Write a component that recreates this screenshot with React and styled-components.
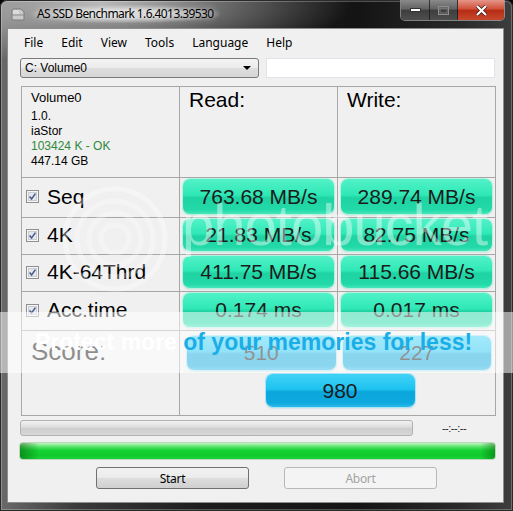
import styled, { createGlobalStyle } from 'styled-components';

const GlobalStyle = createGlobalStyle`
  html, body {
    margin: 0;
    padding: 0;
    background: #000;
  }
  body {
    width: 513px;
    height: 511px;
    overflow: hidden;
  }
`

const Window = styled.div`
  position: relative;
  width: 513px;
  height: 511px;
  box-sizing: border-box;
  display: flex;
  flex-direction: column;
  overflow: hidden;
  border-radius: 7px 7px 0 0;
  box-shadow: inset 0 0 0 1px #2a2a2a, inset 0 0 0 2px rgba(255,255,255,0.25);
  background:
    radial-gradient(ellipse 250px 60px at 100px 4px, rgba(200,200,200,0.9), rgba(160,160,160,0) 100%),
    linear-gradient(90deg, #6a6a6a 0%, #3a3a3a 15%, #1c1c1c 40%, #141414 70%, #2a2a2a 90%, #3e3e3e 100%);
  font-family: "Noto Sans", "Open Sans", sans-serif;
`

const TitleBar = styled.div`
  height: 29px;
  flex: none;
  display: flex;
  align-items: flex-start;
  padding-left: 10px;
`

const Title = styled.div`
  margin-left: 5px;
  margin-top: 5px;
  padding: 0 6px;
  font-size: 12px;
  line-height: 18px;
  letter-spacing: -0.6px;
  color: #000;
  border-radius: 10px;
  background: radial-gradient(ellipse at center, rgba(235,235,235,0.75) 30%, rgba(235,235,235,0) 75%);
  text-shadow: 0 0 6px rgba(255,255,255,0.9);
`

const CaptionGroup = styled.div`
  margin-left: auto;
  margin-right: 8px;
  display: flex;
  height: 20px;
  border: 1px solid rgba(210,210,210,0.55);
  border-top: none;
  border-radius: 0 0 5px 5px;
  overflow: hidden;
`

const CaptionButton = styled.div`
  width: ${p => p.$w}px;
  display: flex;
  align-items: center;
  justify-content: center;
  border-right: 1px solid rgba(20,20,20,0.7);
  background: ${p => p.$close
    ? 'linear-gradient(180deg, #e5968a 0%, #cf4f38 45%, #b62c15 52%, #c8482c 100%)'
    : 'linear-gradient(180deg, #8a8a8a 0%, #626262 45%, #3e3e3e 52%, #4e4e4e 100%)'};
  &:last-child { border-right: none; }
`

const Client = styled.div`
  flex: 1;
  margin: 0 10px 9px 8px;
  background: #f0f0f0;
  display: flex;
  flex-direction: column;
  padding: 0 8px 0 12px;
  box-shadow: 0 0 0 1px #8d8d8d;
`

const MenuBar = styled.div`
  height: 26px;
  display: flex;
  align-items: center;
  gap: 18px;
  padding-left: 4px;
  font-size: 12px;
  color: #000;
`

const DriveRow = styled.div`
  margin-top: 3px;
  height: 20px;
  display: flex;
  gap: 7px;
`

const Combo = styled.div`
  width: 239px;
  box-sizing: border-box;
  border: 1px solid #7a7a7a;
  border-radius: 3px;
  background: linear-gradient(180deg, #f4f4f4 0%, #ececec 48%, #dedede 52%, #d6d6d6 100%);
  display: flex;
  align-items: center;
  padding: 0 7px 0 4px;
  font-family: "Liberation Sans", Arial, sans-serif;
  font-size: 12px;
  justify-content: space-between;
`

const TextBox = styled.div`
  flex: 1;
  background: #fff;
  border: 1px solid #e2e3ea;
`

const ResultGrid = styled.div`
  margin-top: 8px;
  margin-left: 1px;
  width: 475px;
  box-sizing: border-box;
  display: grid;
  grid-template-columns: 157px 157px 157px;
  grid-template-rows: 90px 39px 36px 36px 38px 84px;
  gap: 1px;
  padding: 1px;
  background: #a7a7a7;
  font-family: "Liberation Sans", Arial, sans-serif;
`

const Cell = styled.div`
  background: #f0f0f0;
  min-width: 0;
`

const InfoCell = styled(Cell)`
  padding: 3px 9px 0;
  font-size: 12px;
  line-height: 15px;
  color: #000;
`

const InfoName = styled.div`
  font-size: 13px;
  line-height: 16px;
  margin-bottom: 3px;
`

const InfoOk = styled.div`
  color: #2f8a3a;
`

const HeadCell = styled(Cell)`
  padding: 1px 9px 0;
  font-size: 21px;
  line-height: 24px;
  color: #000;
`

const LabelCell = styled(Cell)`
  display: flex;
  align-items: center;
  gap: 8px;
  padding: 0 0 2px 4px;
  font-size: 21px;
  color: #000;
`

const ValueCell = styled(Cell)`
  display: flex;
  padding: 1px 3px 3px 3px;
`

const ValueBox = styled.div`
  flex: 1;
  display: flex;
  align-items: center;
  justify-content: center;
  border-radius: 7px;
  font-size: ${p => p.$size || 21}px;
  color: #1b1b1b;
  background: ${p => p.$tone === 'blue'
    ? 'linear-gradient(180deg, #40d2f6 0%, #1ec3f0 46%, #0ba6dc 54%, #0ea9de 88%, #2fbbea 100%)'
    : 'linear-gradient(180deg, #52f2c8 0%, #2fe8b6 46%, #1fd3a3 54%, #22d9a8 88%, #44e6bb 100%)'};
  box-shadow: ${p => p.$tone === 'blue'
    ? '0 0 0 1px #a8e4f6, 0 1px 2px rgba(0,110,160,0.35)'
    : '0 0 0 1px #b4f2df, 0 1px 2px rgba(0,140,100,0.35)'};
`

const ScoreLabel = styled(Cell)`
  padding: 5px 9px 0;
  font-size: 26px;
  line-height: 30px;
  color: #111;
`

const ScoreCell = styled(Cell)`
  grid-column: span 2;
  display: grid;
  grid-template-columns: 1fr 1fr;
  grid-template-rows: 34px 33px;
  column-gap: 7px;
  row-gap: 4px;
  padding: 5px 4px 0 7px;
`

const TotalBox = styled(ValueBox)`
  grid-column: span 2;
  justify-self: center;
  width: 149px;
  margin-left: 2px;
`

const ProgressRow = styled.div`
  margin-top: 4px;
  height: 16px;
  display: flex;
  align-items: center;
`

const Progress = styled.div`
  width: 393px;
  height: 16px;
  box-sizing: border-box;
  border: 1px solid #b2b2b2;
  border-radius: 3px;
  background: linear-gradient(180deg, #f2f2f2 0%, #dcdcdc 45%, #cdcdcd 55%, #d8d8d8 100%);
`

const TimeText = styled.div`
  flex: 1;
  text-align: center;
  font-family: "Liberation Sans", Arial, sans-serif;
  font-size: 11px;
  color: #222;
  letter-spacing: -0.5px;
`

const GreenBar = styled.div`
  margin-top: 7px;
  height: 16px;
  width: 475px;
  border-radius: 3px;
  box-shadow: 0 0 0 1px #b9d9b9;
  background:
    linear-gradient(90deg, rgba(0,70,0,0.45) 0%, rgba(0,70,0,0) 4%, rgba(0,70,0,0) 97%, rgba(0,70,0,0.4) 100%),
    linear-gradient(180deg, #c2f6c2 0%, #5ee46e 22%, #16d234 45%, #0fca2c 75%, #1bd23a 100%);
`

const ButtonRow = styled.div`
  margin-top: 8px;
  display: flex;
  gap: 35px;
  padding-left: 76px;
`

const Button = styled.div`
  width: 153px;
  height: 22px;
  box-sizing: border-box;
  border-radius: 3px;
  display: flex;
  align-items: center;
  justify-content: center;
  font-size: 12px;
  letter-spacing: -0.3px;
  color: ${p => p.$disabled ? '#a3a3a3' : '#000'};
  border: 1px solid ${p => p.$disabled ? '#b5b9bc' : '#707070'};
  background: ${p => p.$disabled
    ? '#f4f4f4'
    : 'linear-gradient(180deg, #f2f2f2 0%, #ebebeb 48%, #dddddd 52%, #cfcfcf 100%)'};
`

const Watermark = styled.div`
  position: absolute;
  inset: 0;
  pointer-events: none;
`

const Band = styled.div`
  position: absolute;
  left: 0;
  right: 0;
  top: 312px;
  height: 61px;
  background: rgba(255,255,255,0.52);
`

const Slogan = styled.div`
  position: absolute;
  left: 35px;
  top: 331px;
  font-family: "Liberation Sans", Arial, sans-serif;
  font-weight: bold;
  font-size: 23px;
  line-height: 23px;
  white-space: nowrap;
  color: #1aaee8;
`

const SloganFaint = styled.span`
  color: #ffffff;
`

const LogoWord = styled.div`
  position: absolute;
  left: 182px;
  top: 196px;
  font-family: "Liberation Sans", Arial, sans-serif;
  font-size: 58px;
  line-height: 58px;
  letter-spacing: -1px;
  color: rgba(255,255,255,0.42);
`

const LogoRings = styled.svg`
  position: absolute;
  left: 60px;
  top: 184px;
`

const tests = [
  { name: 'Seq', read: '763.68 MB/s', write: '289.74 MB/s' },
  { name: '4K', read: '21.83 MB/s', write: '82.75 MB/s' },
  { name: '4K-64Thrd', read: '411.75 MB/s', write: '115.66 MB/s' },
  { name: 'Acc.time', read: '0.174 ms', write: '0.017 ms' },
]

const menus = ['File', 'Edit', 'View', 'Tools', 'Language', 'Help']

const Check = () => (
  <svg width="13" height="13" viewBox="0 0 13 13">
    <rect x="0.5" y="0.5" width="12" height="12" fill="#f6f6f6" stroke="#8e8f8f" />
    <rect x="2.5" y="2.5" width="8" height="8" fill="#e4e7ec" stroke="#c9cdd3" />
    <path d="M3.6 6.4 L5.6 9 L9.4 3.6" fill="none" stroke="#4b5d8c" strokeWidth="1.6" />
  </svg>
)

const DriveIcon = () => (
  <svg width="16" height="16" viewBox="0 0 16 16" style={{ marginTop: 6 }}>
    <path d="M3 3 L11 3 L14 6 L14 14 L2 14 L2 5 Z" fill="#c9c9c9" stroke="#7b7b7b" />
    <path d="M2 9 L14 9" stroke="#8d8d8d" />
    <path d="M4 4 L4 8 M6 4 L6 8 M8 4 L8 8" stroke="#eeeeee" />
  </svg>
)

export default function App() {
  return (
    <>
      <GlobalStyle />
      <Window>
        <TitleBar>
          <DriveIcon />
          <Title>AS SSD Benchmark 1.6.4013.39530</Title>
          <CaptionGroup>
            <CaptionButton $w={28}>
              <svg width="11" height="5"><rect x="0.5" y="0.5" width="10" height="3" fill="#fff" stroke="#333" /></svg>
            </CaptionButton>
            <CaptionButton $w={27}>
              <svg width="11" height="9"><rect x="0.5" y="0.5" width="10" height="8" fill="none" stroke="#8e8e8e" /><rect x="2" y="2.5" width="7" height="4.5" fill="none" stroke="#777" /></svg>
            </CaptionButton>
            <CaptionButton $w={46} $close>
              <svg width="13" height="11" viewBox="0 0 13 11">
                <path d="M2 1 L11 10 M11 1 L2 10" stroke="#3a1a14" strokeWidth="3.6" />
                <path d="M2 1 L11 10 M11 1 L2 10" stroke="#fff" strokeWidth="2.2" />
              </svg>
            </CaptionButton>
          </CaptionGroup>
        </TitleBar>
        <Client>
          <MenuBar>
            {menus.map(m => <span key={m}>{m}</span>)}
          </MenuBar>
          <DriveRow>
            <Combo>
              <span>C: Volume0</span>
              <svg width="8" height="4"><path d="M0 0 L8 0 L4 4 Z" fill="#000" /></svg>
            </Combo>
            <TextBox />
          </DriveRow>
          <ResultGrid>
            <InfoCell>
              <InfoName>Volume0</InfoName>
              <div>1.0.</div>
              <div>iaStor</div>
              <InfoOk>103424 K - OK</InfoOk>
              <div>447.14 GB</div>
            </InfoCell>
            <HeadCell>Read:</HeadCell>
            <HeadCell>Write:</HeadCell>
            {tests.map(t => [
              <LabelCell key={t.name + 'l'}><Check />{t.name}</LabelCell>,
              <ValueCell key={t.name + 'r'}><ValueBox>{t.read}</ValueBox></ValueCell>,
              <ValueCell key={t.name + 'w'}><ValueBox>{t.write}</ValueBox></ValueCell>,
            ])}
            <ScoreLabel>Score:</ScoreLabel>
            <ScoreCell>
              <ValueBox $tone="blue">510</ValueBox>
              <ValueBox $tone="blue">227</ValueBox>
              <TotalBox $tone="blue">980</TotalBox>
            </ScoreCell>
          </ResultGrid>
          <ProgressRow>
            <Progress />
            <TimeText>--:--:--</TimeText>
          </ProgressRow>
          <GreenBar />
          <ButtonRow>
            <Button>Start</Button>
            <Button $disabled>Abort</Button>
          </ButtonRow>
        </Client>
        <Watermark>
          <LogoRings width="110" height="110" viewBox="0 0 110 110">
            <circle cx="55" cy="55" r="50" fill="none" stroke="rgba(255,255,255,0.35)" strokeWidth="5" />
            <circle cx="55" cy="55" r="38" fill="none" stroke="rgba(255,255,255,0.3)" strokeWidth="5" />
            <circle cx="55" cy="55" r="26" fill="none" stroke="rgba(255,255,255,0.3)" strokeWidth="5" />
            <circle cx="55" cy="55" r="14" fill="none" stroke="rgba(255,255,255,0.3)" strokeWidth="5" />
          </LogoRings>
          <LogoWord>photobucket</LogoWord>
          <Band />
          <Slogan><SloganFaint>Protect more </SloganFaint>of your memories for less!</Slogan>
        </Watermark>
      </Window>
    </>
  )
}
